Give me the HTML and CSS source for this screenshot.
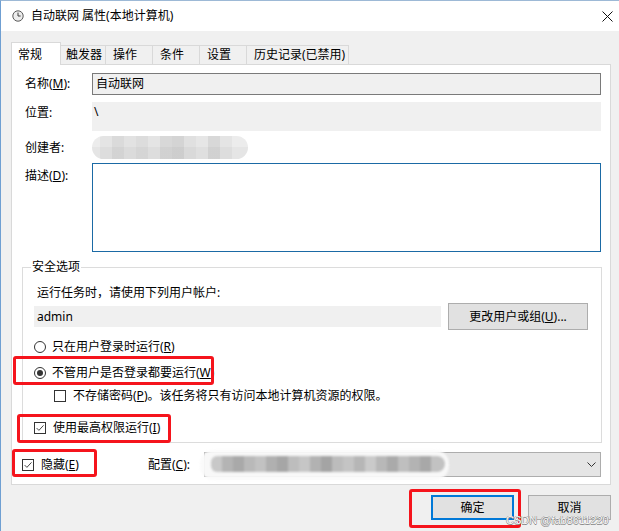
FILE: index.html
```html
<!DOCTYPE html>
<html lang="zh-CN">
<head>
<meta charset="utf-8">
<title>自动联网 属性(本地计算机)</title>
<link rel="stylesheet" href="styles.css">
</head>
<body>
<div class="window">
  <div class="titlebar">
    <svg class="app-icon" viewBox="0 0 12 12" aria-hidden="true">
      <circle cx="6" cy="6" r="5.2" fill="#ececec" stroke="#5a5a5a" stroke-width="1"/>
      <path d="M6 2.6 V6 H8.6" fill="none" stroke="#3a3a3a" stroke-width="1"/>
    </svg>
    <span class="title">自动联网 属性(本地计算机)</span>
    <svg class="close" viewBox="0 0 11 11" aria-hidden="true">
      <path d="M0.5 0.5 L10.5 10.5 M10.5 0.5 L0.5 10.5" stroke="#111" stroke-width="1" fill="none"/>
    </svg>
  </div>

  <div class="client">
    <div class="tabs">
      <div class="tab active">常规</div>
      <div class="tab t-trig">触发器</div>
      <div class="tab t-mid">操作</div>
      <div class="tab t-mid">条件</div>
      <div class="tab t-mid">设置</div>
      <div class="tab t-hist">历史记录(已禁用)</div>
    </div>

    <div class="panel">
      <div class="row row-name">
        <span class="lbl">名称(<u>M</u>):</span>
        <div class="field name-field">自动联网</div>
      </div>
      <div class="row row-loc">
        <span class="lbl lbl-top">位置:</span>
        <div class="field loc-field">\</div>
      </div>
      <div class="row row-creator">
        <span class="lbl">创建者:</span>
        <div class="creator-blur"></div>
      </div>
      <div class="row row-desc">
        <span class="lbl lbl-desc">描述(<u>D</u>):</span>
        <div class="field desc-box"></div>
      </div>

      <fieldset class="group">
        <legend>安全选项</legend>
        <div class="gbody">
          <div class="g-text">运行任务时，请使用下列用户帐户:</div>
          <div class="g-user">
            <div class="user-field">admin</div>
            <button class="btn change">更改用户或组(<u>U</u>)...</button>
          </div>
          <div class="opt r1"><span class="radio"></span>只在用户登录时运行(<u>R</u>)</div>
          <div class="opt r2"><span class="radio on"></span>不管用户是否登录都要运行(<u>W</u>)</div>
          <div class="opt c1"><span class="check"></span>不存储密码(<u>P</u>)。该任务将只有访问本地计算机资源的权限。</div>
          <div class="opt c2"><span class="check"><svg viewBox="0 0 11 11" aria-hidden="true"><path d="M1.8 5.6 L4.3 8.1 L9.4 2.6" fill="none" stroke="#333" stroke-width="1"/></svg></span>使用最高权限运行(<u>I</u>)</div>
        </div>
      </fieldset>

      <div class="bottom-row">
        <div class="opt hide-opt"><span class="check"><svg viewBox="0 0 11 11" aria-hidden="true"><path d="M1.8 5.6 L4.3 8.1 L9.4 2.6" fill="none" stroke="#333" stroke-width="1"/></svg></span>隐藏(<u>E</u>)</div>
        <span class="cfg-label">配置(<u>C</u>):</span>
        <div class="combo">
          <div class="combo-blur"><div class="combo-mosaic"></div></div>
          <svg class="chev" viewBox="0 0 9 5" aria-hidden="true"><path d="M0.5 0.5 L4.5 4.5 L8.5 0.5" fill="none" stroke="#333" stroke-width="1"/></svg>
        </div>
      </div>
    </div>

    <div class="buttons">
      <button class="btn dlg default">确定</button>
      <button class="btn dlg">取消</button>
    </div>
  </div>
</div>

<div class="mark m1"></div>
<div class="mark m2"></div>
<div class="mark m3"></div>
<div class="mark m4"></div>
<div class="watermark">CSDN @fab8611220</div>
</body>
</html>
```

FILE: styles.css
```css
* { box-sizing: border-box; }
html, body { margin: 0; padding: 0; }
body {
  width: 619px;
  height: 531px;
  overflow: hidden;
  position: relative;
  background: #f0f0f0;
  font-family: "Noto Sans", "Noto Sans CJK SC", sans-serif;
  font-size: 12px;
  color: #000;
}
u { text-decoration: underline; text-underline-offset: 1px; }

.window {
  height: 531px;
  border-left: 1px solid #6f9fd2;
  border-top: 1px solid #9db9d6;
  background: #f0f0f0;
}

.titlebar {
  height: 30px;
  background: #fff;
  display: flex;
  align-items: center;
  padding: 0 6px 0 11px;
}
.app-icon { width: 12px; height: 12px; margin-right: 7px; flex-shrink: 0; }
.title { flex: 1; line-height: 16px; }
.close { width: 11px; height: 11px; }

.client { padding: 11px 8px 0 10px; }

.tabs {
  display: flex;
  align-items: flex-end;
  height: 22px;
}
.tab {
  line-height: 16px;
  background: #f0f0f0;
  border-top: 1px solid #d9d9d9;
  border-right: 1px solid #d9d9d9;
  height: 19px;
  padding: 1px 0 0 6px;
  white-space: nowrap;
}
.tab.active {
  position: relative;
  z-index: 1;
  width: 50px;
  height: 23px;
  margin-bottom: -1px;
  background: #fff;
  border-left: 1px solid #d9d9d9;
  padding: 4px 0 0 6px;
}
.t-trig { width: 45px; padding-left: 5px; }
.t-mid { width: 47px; padding-left: 7px; }
.t-hist { width: 102px; padding-left: 7px; }

.panel {
  background: #fff;
  border: 1px solid #d9d9d9;
  padding: 8px 8px 7px 10px;
}

.row { display: flex; }
.lbl { width: 70px; flex-shrink: 0; padding-left: 3px; line-height: 16px; }
.field { flex: 1; margin-right: 1px; }

.row-name { height: 22px; align-items: center; }
.name-field {
  height: 22px;
  border: 1px solid #7a7a7a;
  background: #f0f0f0;
  padding-left: 3px;
  line-height: 20px;
}

.row-loc { margin-top: 7px; height: 29px; align-items: flex-start; }
.lbl-top { padding-top: 3px; }
.loc-field {
  height: 29px;
  background: #f0f0f0;
  padding: 2px 2px 0 2px;
  line-height: 16px;
}

.row-creator { margin-top: 5px; height: 23px; align-items: center; }
.creator-blur {
  width: 156px;
  height: 23px;
  border-radius: 12px;
  background:
    linear-gradient(180deg, rgba(255,255,255,0.0) 0 50%, rgba(0,0,0,0.03) 50% 100%),
    linear-gradient(90deg,
      #ececec 0 8px, #e4e4e4 8px 20px, #dadada 20px 32px, #e2e2e2 32px 44px,
      #dcdcdc 44px 56px, #e4e4e4 56px 68px, #d8d8d8 68px 80px, #d4d4d4 80px 92px,
      #e0e0e0 92px 104px, #e6e6e6 104px 116px, #d8d8d8 116px 128px, #e4e4e4 128px 140px, #ececec 140px 156px);
  filter: blur(0.6px);
}

.row-desc { margin-top: 4px; height: 89px; align-items: flex-start; }
.lbl-desc { padding-top: 5px; }
.desc-box {
  height: 89px;
  border: 1px solid #1b6aa5;
  background: #fff;
}

.group {
  margin: 7px 0 0 0;
  border: 1px solid #dcdcdc;
  padding: 8px 12px 4px 0;
  min-width: 0;
}
.group legend {
  margin-left: 8px;
  padding: 0 1px;
  line-height: 16px;
}
.gbody { padding-left: 11px; }

.g-text { line-height: 20px; height: 20px; padding-left: 3px; }
.g-user {
  display: flex;
  align-items: center;
  gap: 7px;
  height: 27px;
}
.user-field {
  width: 407px;
  height: 21px;
  background: #f0f0f0;
  padding-left: 3px;
  line-height: 21px;
}

.btn {
  font-family: inherit;
  font-size: 12px;
  color: #000;
  background: #e1e1e1;
  border: 1px solid #adadad;
  padding: 0;
  margin: 0;
  line-height: 16px;
}
.change { width: 140px; height: 27px; }

.opt {
  display: flex;
  align-items: center;
  height: 20px;
  line-height: 16px;
  white-space: nowrap;
}
.r1 { margin-top: 7px; }
.r2 { margin-top: 6px; }
.c1 { margin-top: 3px; padding-left: 20px; }
.c2 { margin-top: 12px; }

.radio {
  width: 12px;
  height: 12px;
  border: 1px solid #333;
  border-radius: 50%;
  background: #fff;
  margin-right: 6px;
  display: flex;
  align-items: center;
  justify-content: center;
  flex-shrink: 0;
}
.radio.on::after {
  content: "";
  width: 6px;
  height: 6px;
  border-radius: 50%;
  background: #333;
}
.check {
  width: 12px;
  height: 12px;
  border: 1px solid #333;
  background: #fff;
  margin-right: 7px;
  flex-shrink: 0;
  display: flex;
}
.check svg { width: 10px; height: 10px; }

.bottom-row {
  display: flex;
  align-items: center;
  height: 25px;
  margin-top: 9px;
}
.hide-opt { width: 126px; }
.cfg-label { width: 56px; line-height: 16px; }
.combo {
  flex: 1;
  margin-right: 1px;
  height: 25px;
  border: 1px solid #adadad;
  background: #e5e5e5;
  position: relative;
  display: flex;
  align-items: center;
  justify-content: flex-end;
  padding-right: 4px;
}
.chev { width: 9px; height: 5px; }
.combo-blur {
  position: absolute;
  left: -5px;
  top: -3px;
  width: 249px;
  height: 30px;
  border-radius: 14px;
  background: rgba(250,250,250,0.92);
  filter: blur(0.8px);
}
.combo-mosaic {
  position: absolute;
  left: 11px;
  top: 6px;
  width: 234px;
  height: 16px;
  border-radius: 6px 8px 8px 6px;
  background: linear-gradient(90deg,
    #c8c8c8 0 11px, #b4b4b4 11px 22px, #a9a9a9 22px 33px, #b9b9b9 33px 44px,
    #c2c2c2 44px 55px, #b0b0b0 55px 66px, #a6a6a6 66px 77px, #bdbdbd 77px 88px,
    #c6c6c6 88px 99px, #b2b2b2 99px 110px, #a4a4a4 110px 121px, #bcbcbc 121px 132px,
    #c4c4c4 132px 143px, #b6b6b6 143px 154px, #cacaca 154px 165px, #b8b8b8 165px 176px,
    #aaaaaa 176px 187px, #bfbfbf 187px 198px, #b3b3b3 198px 209px, #a8a8a8 209px 220px,
    #c2c2c2 220px 234px);
}

.buttons {
  display: flex;
  justify-content: flex-end;
  gap: 14px;
  margin-top: 10px;
}
.dlg { width: 83px; height: 25px; }
.default { border: 2px solid #0078d7; }

.mark {
  position: absolute;
  border: 3px solid #f5141c;
  border-radius: 3px;
}
.m1 { left: 13px; top: 356px; width: 201px; height: 29px; }
.m2 { left: 17px; top: 414px; width: 154px; height: 29px; }
.m3 { left: 12px; top: 449px; width: 85px; height: 28px; }
.m4 { left: 409px; top: 489px; width: 112px; height: 39px; }

.watermark {
  position: absolute;
  left: 506px;
  top: 514px;
  font-family: "Liberation Sans", sans-serif;
  font-size: 11px;
  line-height: 13px;
  color: #fafafa;
  text-shadow: 0.5px 0 0 #8a8a8a, -0.5px 0 0 #8a8a8a, 0 0.5px 0 #8a8a8a, 0 -0.5px 0 #8a8a8a;
  white-space: nowrap;
}
```
